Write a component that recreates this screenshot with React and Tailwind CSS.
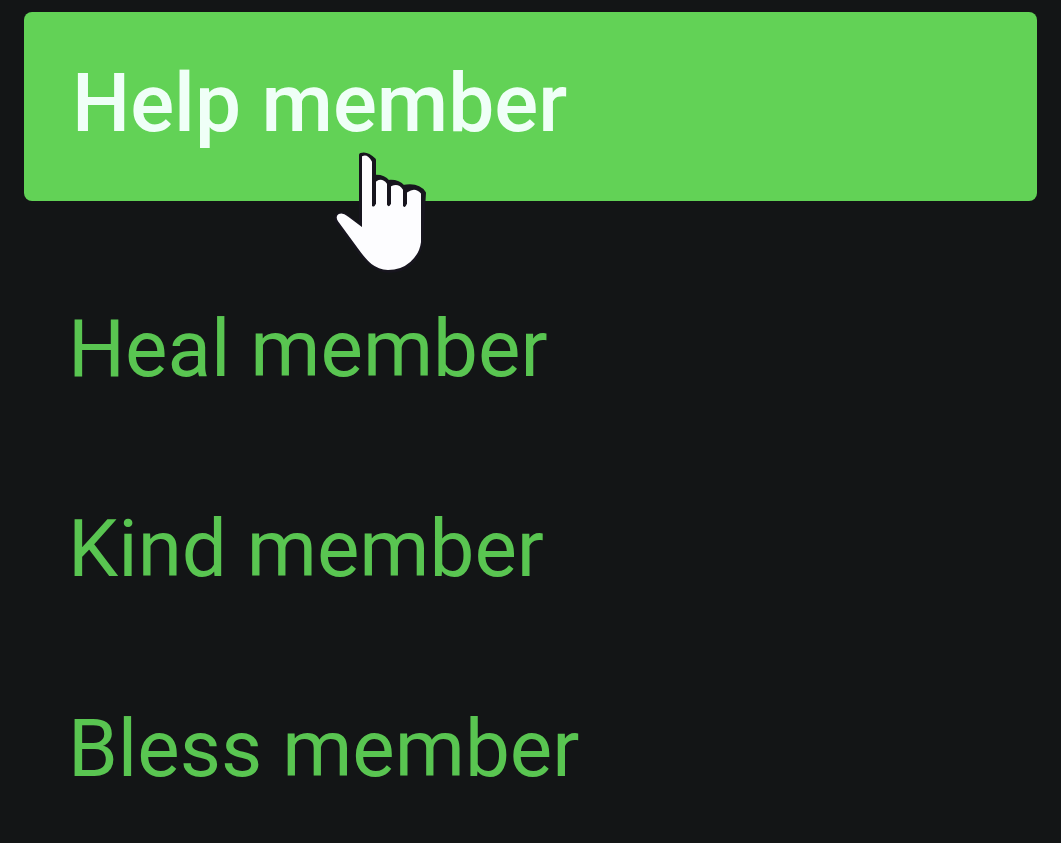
export default function App() {
  const items = ["Heal member", "Kind member", "Bless member"];
  return (
    <main className="min-h-screen bg-[#131516] px-6 pt-3 font-['Roboto',sans-serif] text-[80px] leading-none">
      <nav aria-label="Member actions" className="flex flex-col gap-20">
        <div className="relative mb-2">
          <button className="flex h-[189px] w-full items-center rounded-lg bg-[#62d256] px-12 pb-2 text-left text-[82px] font-medium text-[#effff7]">Help member</button>
          <svg aria-hidden="true" className="pointer-events-none absolute left-[308px] top-[138px] h-[124px] w-[100px]" viewBox="0 0 100 124">
            <path d="M29 5Q35 3 42 10V27Q51 26 56 32Q66 31 71 37Q86 34 92 43L89 92C87 109 74 121 57 121C42 120 35 111 27 101L5 71C2 65 9 62 15 66L29 77Z" fill="#17151e" stroke="#17151e" strokeWidth="4" strokeLinejoin="round" />
            <path d="M31 7Q35 5 39 12V56Q42 60 45 54V32Q50 29 54 34V55Q57 60 60 54V37Q66 34 70 40V56Q73 61 76 54V43Q83 38 88 44V92C86 107 73 119 56 119C42 118 36 110 29 101L7 71C3 65 9 62 15 67L31 79Z" fill="#fdfdff" stroke="#fdfdff" strokeWidth="2" strokeLinejoin="round" />
          </svg>
        </div>
        {items.map((t) => (
          <button key={t} className="flex h-[120px] w-full items-center px-11 text-left text-[#59c551]">{t}</button>
        ))}
      </nav>
    </main>
  );
}
